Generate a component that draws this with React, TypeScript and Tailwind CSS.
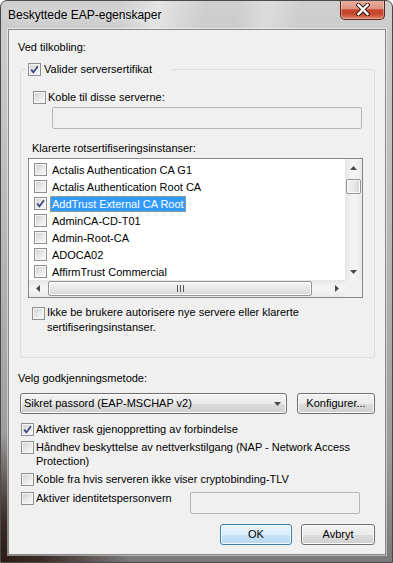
import React from "react";

function Check({ checked }: { checked?: boolean }) {
  return (
    <span className="inline-flex w-[13px] h-[13px] shrink-0 items-center justify-center border border-[#8e8f8f] bg-[linear-gradient(135deg,#cfcfcf_0%,#ececec_60%,#fbfbfb_100%)] shadow-[inset_0_0_0_1px_#f6f6f6]">
      {checked && (
        <svg width="9" height="9" viewBox="0 0 9 9">
          <path d="M1.2 4.6 L3.4 7.4 L7.9 1.2" fill="none" stroke="#33467a" strokeWidth="1.7" />
        </svg>
      )}
    </span>
  );
}

const Arrow = ({ dir }: { dir: "up" | "down" | "left" | "right" }) => {
  const d =
    dir === "up"
      ? "M0 4 L3.5 0 L7 4 Z"
      : dir === "down"
      ? "M0 0 L7 0 L3.5 4 Z"
      : dir === "left"
      ? "M4 0 L4 7 L0 3.5 Z"
      : "M0 0 L4 3.5 L0 7 Z";
  const w = dir === "up" || dir === "down" ? 7 : 4;
  const h = dir === "up" || dir === "down" ? 4 : 7;
  return (
    <svg width={w} height={h} viewBox={`0 0 ${w} ${h}`}>
      <path d={d} fill="#4a4a4a" />
    </svg>
  );
};

const items = [
  "Actalis Authentication CA G1",
  "Actalis Authentication Root CA",
  "AddTrust External CA Root",
  "AdminCA-CD-T01",
  "Admin-Root-CA",
  "ADOCA02",
  "AffirmTrust Commercial",
];

const btn =
  "flex items-center justify-center border border-[#707070] rounded-[3px] bg-[linear-gradient(#f2f2f2_0%,#ebebeb_50%,#dddddd_51%,#cfcfcf_100%)] shadow-[inset_0_0_0_1px_#fbfbfb]";

export default function App() {
  return (
    <div className="w-[393px] h-[563px] bg-white font-['Liberation_Sans',Arial,sans-serif] text-[11px] leading-[15px] text-black">
      <div className="w-[393px] h-[563px] flex flex-col rounded-t-[7px] border border-[#4a4a4a] overflow-hidden bg-[radial-gradient(circle_at_0%_100%,#2a1b17_0px,#3b2b27_40px,rgba(60,45,40,0)_130px),linear-gradient(to_bottom,#cfcfcf_0%,#b9b9b9_40%,#9c9c9c_80%,#7a7a7a_100%)]">
        {/* title bar */}
        <div className="h-[28px] shrink-0 flex items-start justify-between bg-[linear-gradient(100deg,rgba(255,255,255,0)_30%,rgba(255,255,255,0.45)_40%,rgba(255,255,255,0)_52%,rgba(255,255,255,0)_60%,rgba(255,255,255,0.3)_68%,rgba(255,255,255,0)_76%)]">
          <div className="pl-[7px] pt-[7px] text-[12px] [text-shadow:0_0_8px_rgba(255,255,255,0.95)]">
            Beskyttede EAP-egenskaper
          </div>
          <div className="-mt-[1px] mr-[7px] w-[45px] h-[20px] rounded-b-[5px] border border-t-0 border-[#5a2219] bg-[linear-gradient(#eab0a2_0%,#de9482_45%,#c8452c_52%,#c54a30_75%,#e0876a_100%)] shadow-[inset_0_0_0_1px_rgba(255,255,255,0.35)] flex items-center justify-center">
            <svg width="14" height="13" viewBox="0 0 14 13">
              <path d="M2.5 2 L11.5 11 M11.5 2 L2.5 11" stroke="#3b1a14" strokeWidth="4.4" strokeLinecap="square" />
              <path d="M2.5 2 L11.5 11 M11.5 2 L2.5 11" stroke="#ffffff" strokeWidth="2.4" strokeLinecap="square" />
            </svg>
          </div>
        </div>

        {/* client */}
        <div className="ml-[7px] mr-[6px] mb-[7px] flex-1 border border-[#8a8a8a] bg-[#f0f0f0] pl-[9px] pt-[10px] flex flex-col shadow-[0_0_0_1px_rgba(255,255,255,0.45)]">
          <div>Ved tilkobling:</div>

          <fieldset className="mt-[7px] ml-[2px] w-[355px] border border-[#d5dfe5] rounded-[3px] p-0 pb-[22px]">
            <legend className="ml-[4px] w-[147px] pl-[3px] flex items-center h-[15px]">
              <Check checked />
              <span className="ml-[3px]">Valider serversertifikat</span>
            </legend>

            <div className="mt-[13px] ml-[12px] flex items-center h-[15px]">
              <Check />
              <span className="ml-[2px]">Koble til disse serverne:</span>
            </div>
            <div className="mt-[2px] ml-[31px] w-[310px] h-[22px] border border-[#b5b8bb] rounded-[2px] bg-[#f0f0f0]" />

            <div className="mt-[12px] ml-[11px]">Klarerte rotsertifiseringsinstanser:</div>

            <div className="mt-[2px] ml-[7px] w-[335px] h-[140px] border border-[#828790] bg-white grid grid-cols-[316px_17px] grid-rows-[121px_17px]">
              <div className="overflow-hidden pt-[2px] pl-[5px]">
                {items.map((t, i) => (
                  <div key={t} className="h-[17px] flex items-center">
                    <Check checked={i === 2} />
                    <span
                      className={
                        "ml-[3px] px-[2px] h-[16px] leading-[16px] whitespace-nowrap " +
                        (i === 2
                          ? "bg-[#3399ff] text-white outline outline-1 outline-dotted outline-[#d9a05a] outline-offset-[-1px]"
                          : "")
                      }
                    >
                      {t}
                    </span>
                  </div>
                ))}
              </div>
              {/* vertical scrollbar */}
              <div className="flex flex-col items-center bg-[linear-gradient(to_right,#e6e6e6,#f4f4f4_40%,#f4f4f4_60%,#e9e9e9)]">
                <div className="h-[17px] w-full flex items-center justify-center">
                  <Arrow dir="up" />
                </div>
                <div className="mt-[3px] w-[15px] h-[15px] rounded-[2px] border border-[#959595] bg-[linear-gradient(to_right,#f4f4f4,#e8e8e8_50%,#d6d6d6)] shadow-[inset_0_0_0_1px_#fafafa]" />
                <div className="flex-1" />
                <div className="h-[17px] w-full flex items-center justify-center">
                  <Arrow dir="down" />
                </div>
              </div>
              {/* horizontal scrollbar */}
              <div className="flex items-center bg-[linear-gradient(to_bottom,#e6e6e6,#f4f4f4_40%,#f4f4f4_60%,#e9e9e9)]">
                <div className="w-[17px] h-full flex items-center justify-center">
                  <Arrow dir="left" />
                </div>
                <div className="ml-[2px] w-[264px] h-[15px] rounded-[2px] border border-[#959595] bg-[linear-gradient(to_bottom,#f4f4f4,#e8e8e8_50%,#d6d6d6)] shadow-[inset_0_0_0_1px_#fafafa] flex items-center justify-center">
                  <svg width="7" height="7" viewBox="0 0 7 7">
                    <path d="M0.5 0 V7 M3.5 0 V7 M6.5 0 V7" stroke="#555" strokeWidth="1" />
                  </svg>
                </div>
                <div className="flex-1" />
                <div className="w-[17px] h-full flex items-center justify-center">
                  <Arrow dir="right" />
                </div>
              </div>
              <div className="bg-[#f0f0f0]" />
            </div>

            <div className="mt-[7px] ml-[11px] flex items-start">
              <span className="mt-[2px]">
                <Check />
              </span>
              <span className="ml-[2px]">
                Ikke be brukere autorisere nye servere eller klarerte
                <br />
                sertifiseringsinstanser.
              </span>
            </div>
          </fieldset>

          <div className="mt-[13px]">Velg godkjenningsmetode:</div>

          <div className="mt-[7px] ml-[2px] flex h-[21px]">
            <div className={btn + " w-[267px] !justify-between pl-[3px] pr-[5px]"}>
              <span>Sikret passord (EAP-MSCHAP v2)</span>
              <Arrow dir="down" />
            </div>
            <div className={btn + " ml-[10px] w-[78px]"}>Konfigurer...</div>
          </div>

          <div className="mt-[8px] ml-[3px] flex items-center h-[15px]">
            <Check checked />
            <span className="ml-[2px]">Aktiver rask gjenoppretting av forbindelse</span>
          </div>
          <div className="mt-[3px] ml-[3px] flex items-start leading-[14px]">
            <span className="mt-[1px]">
              <Check />
            </span>
            <span className="ml-[2px]">
              Håndhev beskyttelse av nettverkstilgang (NAP - Network Access
              <br />
              Protection)
            </span>
          </div>
          <div className="mt-[4px] ml-[3px] flex items-center h-[15px]">
            <Check />
            <span className="ml-[2px]">Koble fra hvis serveren ikke viser cryptobinding-TLV</span>
          </div>
          <div className="mt-[4px] flex items-start">
            <div className="ml-[3px] w-[169px] flex items-center h-[15px]">
              <Check />
              <span className="ml-[2px]">Aktiver identitetspersonvern</span>
            </div>
            <div className="mt-[1px] w-[170px] h-[22px] border border-[#b5b8bb] rounded-[2px] bg-[#f0f0f0]" />
          </div>

          <div className="mt-[10px] pr-[10px] flex justify-end gap-[9px]">
            <div className="w-[72px] h-[21px] flex items-center justify-center border border-[#3c7fb1] rounded-[3px] bg-[linear-gradient(#e9f4fc_0%,#dcedfb_50%,#c8e2f7_51%,#b9d8f2_100%)] shadow-[inset_0_0_0_1px_#f4faff]">
              OK
            </div>
            <div className={btn + " w-[74px] h-[21px]"}>Avbryt</div>
          </div>
        </div>
      </div>
    </div>
  );
}
